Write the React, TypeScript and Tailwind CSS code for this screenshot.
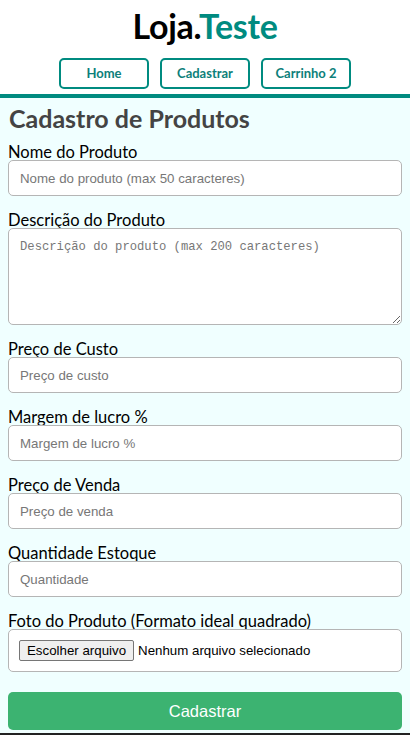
import React from "react";

const fields = [
  { label: "Nome do Produto", placeholder: "Nome do produto (max 50 caracteres)" },
];

const numberFields = [
  { label: "Preço de Custo", placeholder: "Preço de custo" },
  { label: "Margem de lucro %", placeholder: "Margem de lucro %" },
  { label: "Preço de Venda", placeholder: "Preço de venda" },
  { label: "Quantidade Estoque", placeholder: "Quantidade" },
];

const labelFont = { fontFamily: "Lato, 'Open Sans', sans-serif" };

const Field = ({ label, placeholder }: { label: string; placeholder: string }) => (
  <div className="flex flex-col">
    <label className="text-[16.5px] leading-[20px] text-black mb-[-2px]" style={labelFont}>
      {label}
    </label>
    <input
      placeholder={placeholder}
      className="h-[36px] w-full rounded-[5px] border border-[#b5b5b5] bg-white px-[11px] text-[13.3px] placeholder:text-[#777] outline-none font-['Liberation_Sans',Arial,sans-serif]"
    />
  </div>
);

export default function App() {
  return (
    <div className="min-h-screen bg-[#f0ffff]">
      {/* Header */}
      <header className="bg-white border-b-4 border-[#008b80]">
        <h1 className="pt-[6px] text-center text-[34px] font-bold leading-[40px] tracking-[-0.3px]" style={labelFont}>
          <span className="text-black">Loja.</span>
          <span className="text-[#008b80]">Teste</span>
        </h1>
        <nav className="flex justify-center gap-[11px] pt-[12px] pb-[5px]">
          {["Home", "Cadastrar", "Carrinho 2"].map((item) => (
            <a
              key={item}
              href="#"
              className="flex h-[31px] w-[90px] items-center justify-center rounded-[5px] border-2 border-[#008b80] text-[13px] font-bold text-[#0d7f7a]"
              style={labelFont}
            >
              {item}
            </a>
          ))}
        </nav>
      </header>

      {/* Form */}
      <main className="px-[8px] pb-[3px]">
        <h2 className="mt-[5px] text-[25px] font-bold leading-[30px] text-[#444] pl-[1px]" style={labelFont}>
          Cadastro de Produtos
        </h2>
        <form className="mt-[9px] flex flex-col gap-[14px]">
          {fields.map((f) => (
            <Field key={f.label} {...f} />
          ))}
          <div className="flex flex-col">
            <label className="text-[16.5px] leading-[20px] text-black mb-[-2px]" style={labelFont}>
              Descrição do Produto
            </label>
            <textarea
              placeholder="Descrição do produto (max 200 caracteres)"
              className="h-[97px] w-full rounded-[5px] border border-[#b5b5b5] bg-white px-[11px] py-[9px] text-[12.2px] placeholder:text-[#777] outline-none font-['Liberation_Mono',monospace]"
            />
          </div>
          {numberFields.map((f) => (
            <Field key={f.label} {...f} />
          ))}
          <div className="flex flex-col">
            <label className="text-[16.5px] leading-[20px] text-black mb-[-2px]" style={labelFont}>
              Foto do Produto (Formato ideal quadrado)
            </label>
            <div className="flex h-[43px] items-center gap-[4px] rounded-[5px] border border-[#b5b5b5] bg-white px-[10px] text-[13.3px] font-['Liberation_Sans',Arial,sans-serif]">
              <button
                type="button"
                className="h-[21px] rounded-[2px] border border-[#767676] bg-[#efefef] px-[7px] text-[13.3px] leading-[19px] text-black"
              >
                Escolher arquivo
              </button>
              <span className="text-black">Nenhum arquivo selecionado</span>
            </div>
          </div>
          <button
            type="button"
            className="mt-[6px] h-[38px] w-full rounded-[5px] bg-[#3cb371] text-[16.5px] text-white font-['Liberation_Sans',Arial,sans-serif]"
          >
            Cadastrar
          </button>
        </form>
      </main>
      <div className="h-[3px] bg-[#222]" />
    </div>
  );
}
